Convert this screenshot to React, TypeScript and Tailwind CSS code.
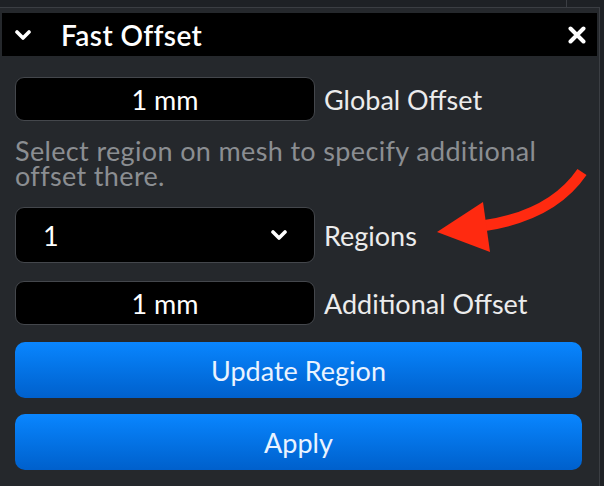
import { ReactNode } from "react";

const Chevron = ({ className }: { className?: string }) => (
  <svg viewBox="0 0 16 10" className={className} fill="none">
    <path d="M2 2 L8 8 L14 2" stroke="currentColor" strokeWidth="3.6" strokeLinecap="round" strokeLinejoin="round" />
  </svg>
);

const Close = () => (
  <svg viewBox="0 0 18 18" className="w-[18px] h-[18px] text-white" fill="none">
    <path d="M2.5 2.5 L15.5 15.5 M15.5 2.5 L2.5 15.5" stroke="currentColor" strokeWidth="4" strokeLinecap="round" />
  </svg>
);

const Field = ({ children, label, tall }: { children: ReactNode; label: string; tall?: boolean }) => (
  <div className="flex items-center gap-[9px]">
    <div
      className={`w-[300px] ${tall ? "h-[56px]" : "h-[44px]"} bg-black rounded-[9px] border border-[#44474c] flex items-center text-white`}
    >
      {children}
    </div>
    <span className="text-[#ececec]">{label}</span>
  </div>
);

const BlueButton = ({ text }: { text: string }) => (
  <button className="h-[56px] w-full rounded-[10px] bg-gradient-to-b from-[#0a86ff] to-[#0060cc] text-[#eaf3ff]">
    {text}
  </button>
);

export default function App() {
  return (
    <div
      className="relative w-[604px] h-[486px] overflow-hidden bg-[#1e2125] flex flex-col text-[27px] leading-none"
      style={{ fontFamily: "Lato, 'Noto Sans', sans-serif" }}
    >
      {/* toolbar strip above the panel */}
      <div className="h-[7px] flex shrink-0">
        <div className="w-[567px] border-r border-[#3b3e43]" />
      </div>

      <div className="flex-1 flex">
        <div className="w-[600px] border-t border-r border-[#3b3e43] bg-[#25282c] pt-[5px] flex flex-col">
          {/* panel header */}
          <div className="mx-[2px] h-[43px] bg-black flex items-center pl-[13px] pr-[11px]">
            <Chevron className="w-[16px] h-[10px] text-white" />
            <span className="ml-[30px] text-white font-semibold text-[28px] tracking-[0.4px]">Fast Offset</span>
            <span className="ml-auto flex">
              <Close />
            </span>
          </div>

          <div className="pl-[15px] pr-[17px] pt-[21px] flex flex-col">
            <Field label="Global Offset">
              <span className="w-full text-center">1 mm</span>
            </Field>

            <p className="mt-[17px] text-[#8b8e92] leading-[25px] tracking-[0.35px]">
              Select region on mesh to specify additional offset there.
            </p>

            <div className="mt-[19px]">
              <Field label="Regions" tall>
                <span className="pl-[27px]">1</span>
                <Chevron className="ml-auto mr-[27px] w-[16px] h-[10px] text-white" />
              </Field>
            </div>

            <div className="mt-[18px]">
              <Field label="Additional Offset">
                <span className="w-full text-center">1 mm</span>
              </Field>
            </div>

            <div className="mt-[17px] flex flex-col gap-[16px]">
              <BlueButton text="Update Region" />
              <BlueButton text="Apply" />
            </div>
          </div>
        </div>
      </div>

      {/* callout arrow pointing at the regions selector */}
      <svg className="absolute inset-0 pointer-events-none" width="604" height="486" viewBox="0 0 604 486">
        <path d="M582 172 Q552 216 482 226" stroke="#ff2a10" strokeWidth="11" fill="none" />
        <path d="M437 232 L483 202 L490 252 Z" fill="#ff2a10" />
      </svg>
    </div>
  );
}
